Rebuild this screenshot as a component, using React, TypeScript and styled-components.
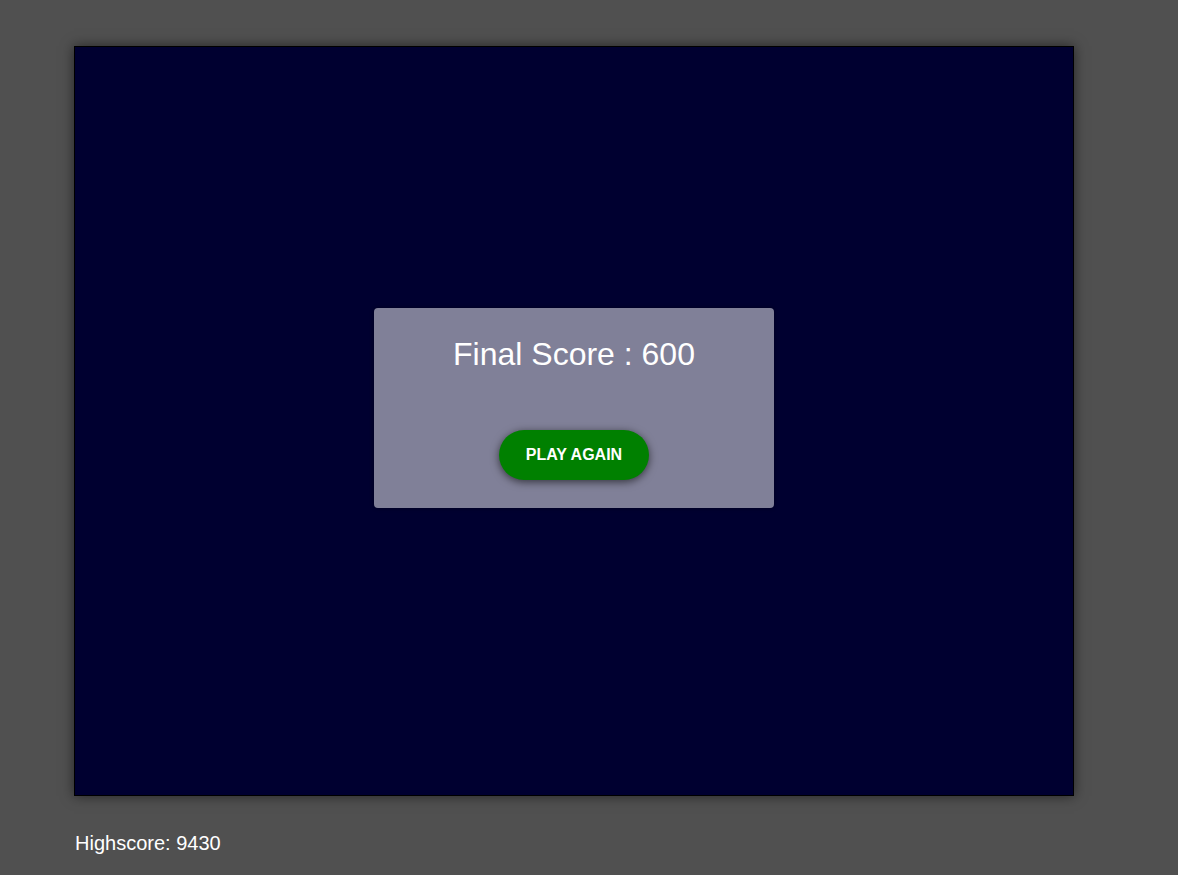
import React from "react";
import styled, { createGlobalStyle } from "styled-components";

const GlobalStyle = createGlobalStyle`
  html, body {
    margin: 0;
    padding: 0;
    background: #505050;
    font-family: "Liberation Sans", Arial, sans-serif;
    color: #ffffff;
  }
`;

const Page = styled.div`
  padding: 46px 0 0 74px;
  min-height: 875px;
  box-sizing: border-box;
`;

const Board = styled.div`
  position: relative;
  width: 1000px;
  height: 750px;
  box-sizing: border-box;
  border: 1px solid #000000;
  background: #000030;
  box-shadow: 0 0 12px rgba(0, 0, 0, 0.55);
`;

const Modal = styled.div`
  position: absolute;
  top: 261px;
  left: 50%;
  transform: translateX(-50%);
  width: 400px;
  height: 200px;
  box-sizing: border-box;
  padding-top: 28px;
  display: flex;
  flex-direction: column;
  align-items: center;
  background: rgba(255, 255, 255, 0.5);
  border-radius: 4px;
  box-shadow: 0 0 4px rgba(0, 0, 0, 0.4);
`;

const Title = styled.h2`
  margin: 0;
  font-size: 32px;
  font-weight: normal;
  line-height: 37px;
`;

const PlayButton = styled.button`
  margin-top: 57px;
  width: 150px;
  height: 50px;
  border: none;
  border-radius: 25px;
  background: #008000;
  color: #ffffff;
  font-family: "Liberation Sans", Arial, sans-serif;
  font-size: 16px;
  font-weight: bold;
  cursor: pointer;
  box-shadow: 0 2px 8px rgba(0, 0, 0, 0.6);
`;

const Highscore = styled.div`
  margin-top: 36px;
  padding-left: 1px;
  font-size: 20px;
  line-height: 23px;
`;

const App: React.FC = () => {
  return (
    <>
      <GlobalStyle />
      <Page>
        <Board>
          <Modal>
            <Title>Final Score : 600</Title>
            <PlayButton>PLAY AGAIN</PlayButton>
          </Modal>
        </Board>
        <Highscore>Highscore: 9430</Highscore>
      </Page>
    </>
  );
};

export default App;
